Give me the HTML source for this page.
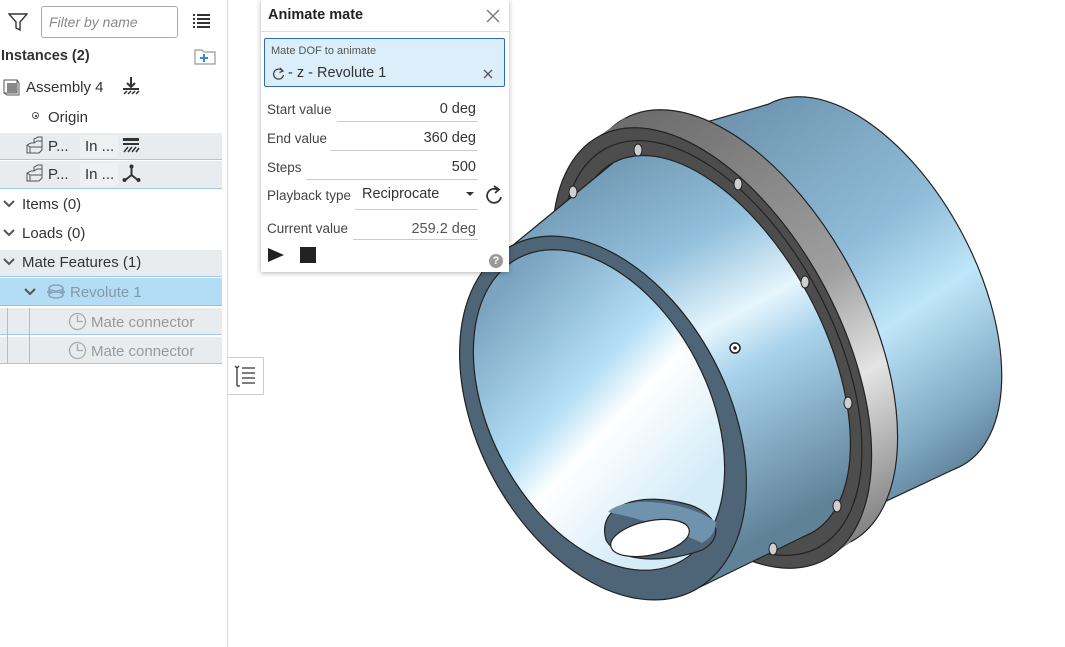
<!DOCTYPE html>
<html><head><meta charset="utf-8">
<style>
*{margin:0;padding:0;box-sizing:border-box}
body{width:1065px;height:647px;overflow:hidden;background:#fff;font-family:"Liberation Sans",sans-serif;color:#333;position:relative}
.a{position:absolute;white-space:nowrap}
.row{position:absolute;left:0;width:222px;background:#e9ecef;border-bottom:1px solid #9fcbe8}
.t{font-size:14.5px;color:#333}
.lab{position:absolute;left:267px;font-size:13.5px;color:#444}
.val{position:absolute;right:33px;font-size:14.5px;color:#333;text-align:right}
.ln{position:absolute;height:1px;background:#ccc}
</style></head><body>

<svg class="a" style="left:0;top:0" width="1065" height="647" viewBox="0 0 1065 647" xmlns:xlink="http://www.w3.org/1999/xlink">
<defs>
<linearGradient id="gb" gradientUnits="userSpaceOnUse" x1="560" y1="170" x2="760" y2="540">
<stop offset="0" stop-color="#6c93ae"/><stop offset="0.3" stop-color="#93c0dc"/><stop offset="0.5" stop-color="#e6f6fd"/><stop offset="0.62" stop-color="#a9d3ec"/><stop offset="1" stop-color="#5f8299"/></linearGradient>
<linearGradient id="gb2" xlink:href="#gb" href="#gb" gradientTransform="rotate(-62 712 348)"/>
<linearGradient id="gk" gradientUnits="userSpaceOnUse" x1="740" y1="110" x2="990" y2="470">
<stop offset="0" stop-color="#6f95af"/><stop offset="0.4" stop-color="#8fbcd8"/><stop offset="0.6" stop-color="#bfe6fa"/><stop offset="0.85" stop-color="#7fa8c2"/><stop offset="1" stop-color="#58788f"/></linearGradient>
<linearGradient id="gk2" xlink:href="#gk" href="#gk" gradientTransform="rotate(-62 865 285)"/>
<linearGradient id="gg" gradientUnits="userSpaceOnUse" x1="640" y1="120" x2="900" y2="560">
<stop offset="0" stop-color="#6e6e6e"/><stop offset="0.45" stop-color="#a0a0a0"/><stop offset="0.65" stop-color="#e4e4e4"/><stop offset="1" stop-color="#666"/></linearGradient>
<linearGradient id="gg2" xlink:href="#gg" href="#gg" gradientTransform="rotate(-62 738 330)"/>
<linearGradient id="gi" gradientUnits="userSpaceOnUse" x1="500" y1="290" x2="700" y2="480">
<stop offset="0" stop-color="#7aa4c0"/><stop offset="0.45" stop-color="#b4dff6"/><stop offset="0.62" stop-color="#ffffff"/><stop offset="1" stop-color="#d4ecf8"/></linearGradient>
<linearGradient id="gi2" xlink:href="#gi" href="#gi" gradientTransform="rotate(-62 598 408)"/>
</defs>
<g stroke="#222" stroke-width="1.2">
<ellipse cx="865" cy="285" rx="205" ry="110" transform="rotate(62 865 285)" fill="url(#gk2)"/>
<polygon points="644,140 769,104 961,466 846,520" fill="url(#gk)" stroke="none"/>
<line x1="644" y1="140" x2="769" y2="104"/>
<line x1="846" y1="520" x2="961" y2="466"/>
<ellipse cx="738" cy="330" rx="240" ry="128" transform="rotate(62 738 330)" fill="url(#gg2)"/>
<polygon points="599,136 625,118 851,542 825,560" fill="url(#gg)" stroke="none"/>
<ellipse cx="712" cy="348" rx="240" ry="128" transform="rotate(62 712 348)" fill="#4d4d4d"/>
<ellipse cx="712" cy="348" rx="226" ry="120" transform="rotate(62 712 348)" fill="none" stroke="#222"/>
<ellipse cx="712" cy="348" rx="210" ry="110" transform="rotate(62 712 348)" fill="url(#gb2)"/>
<polygon points="512,246 613,163 811,533 694,590" fill="url(#gb)" stroke="none"/>
<line x1="512" y1="246" x2="613" y2="163"/>
<line x1="694" y1="590" x2="811" y2="533"/>
<ellipse cx="603" cy="418" rx="195" ry="125" transform="rotate(62 603 418)" fill="#4e6577"/>
<ellipse cx="599" cy="410" rx="172" ry="109" transform="rotate(62 599 410)" fill="url(#gi2)"/>
<path d="M606,540 C596,505 640,490 690,505 C722,516 722,540 702,550 C670,562 620,565 606,540Z" fill="#4e6577"/>
<path d="M608,512 C625,495 685,500 716,522 C716,530 712,537 702,543 C665,525 628,516 608,512Z" fill="#6f93ad" stroke="none"/>
<ellipse cx="650" cy="538" rx="40" ry="17" transform="rotate(-12 650 538)" fill="#fff"/>
</g>
<g fill="#cfcfcf" stroke="#222" stroke-width="1">
<ellipse cx="638" cy="150" rx="4" ry="6"/><ellipse cx="573" cy="192" rx="4" ry="6"/><ellipse cx="738" cy="184" rx="4" ry="6"/>
<ellipse cx="805" cy="282" rx="4" ry="6"/><ellipse cx="848" cy="403" rx="4" ry="6"/><ellipse cx="837" cy="506" rx="4" ry="6"/>
<ellipse cx="773" cy="549" rx="4" ry="6"/>
</g>
<circle cx="735" cy="348" r="5" fill="#fff" stroke="#222" stroke-width="1.5"/><circle cx="735" cy="348" r="1.8" fill="#222"/>
</svg>

<div class="a" style="left:227px;top:0;width:1px;height:647px;background:#ddd"></div>
<svg class="a" style="left:8px;top:12px" width="20" height="20" viewBox="0 0 20 20"><path d="M1,2 H19 L12,10 V18 L8,16 V10 Z" fill="none" stroke="#333" stroke-width="1.4"/></svg>
<div class="a" style="left:41px;top:6px;width:137px;height:32px;border:1px solid #aaa;border-radius:3px;font-style:italic;color:#888;font-size:14px;padding:7px 7px">Filter by name</div>
<svg class="a" style="left:193px;top:14px" width="17" height="15"><g fill="#333"><rect x="0" y="0" width="2" height="2"/><rect x="4" y="0" width="13" height="2"/><rect x="0" y="4" width="2" height="2"/><rect x="4" y="4" width="13" height="2"/><rect x="0" y="8" width="2" height="2"/><rect x="4" y="8" width="13" height="2"/><rect x="0" y="12" width="2" height="2"/><rect x="4" y="12" width="13" height="2"/></g></svg>
<div class="a" style="left:1px;top:48px;font-size:14.5px;font-weight:bold;color:#333">Instances (2)</div>
<svg class="a" style="left:194px;top:48px" width="23" height="18"><path d="M1,2 H8 L10,4 H21 V16 H1 Z" fill="none" stroke="#999" stroke-width="1.2"/><path d="M6,10 H14 M10,6 V14" stroke="#3a8ad8" stroke-width="2"/></svg>
<svg class="a" style="left:3px;top:79px" width="18" height="17"><rect x="1" y="1" width="13" height="13" fill="#fff" stroke="#555"/><rect x="4" y="4" width="10" height="10" fill="#888"/><path d="M1,14 L4,16 H16 V4 L14,1" fill="none" stroke="#555"/></svg>
<div class="a t" style="left:26px;top:79px;font-size:15px">Assembly 4</div>
<svg class="a" style="left:122px;top:77px" width="18" height="18"><path d="M9,0 V9 M5,6 L9,10 L13,6" stroke="#333" stroke-width="2" fill="none"/><rect x="1" y="11" width="16" height="2" fill="#333"/><path d="M2,17 L5,14 M6,17 L9,14 M10,17 L13,14 M14,17 L17,14" stroke="#333" stroke-width="1.5"/></svg>
<div class="a" style="left:32px;top:112px;width:7px;height:7px;border:1px solid #555;border-radius:50%"></div>
<div class="a" style="left:34.5px;top:114.5px;width:2px;height:2px;background:#555"></div>
<div class="a t" style="left:48px;top:109px;font-size:15px">Origin</div>

<div class="row" style="top:133px;height:27px"></div>
<div class="row" style="top:161px;height:28px"></div>
<div class="a" style="left:80px;top:135px;width:38px;height:23px;background:#eef0f2"></div>
<div class="a" style="left:80px;top:163px;width:38px;height:23px;background:#eef0f2"></div>
<svg class="a" style="left:25px;top:136px" width="19" height="19"><path d="M2,17 V9 L6,7 H9 V3 L13,1 H17 V14 L14,17 Z M2,9 L5,11 H17 M9,7 L12,5 H17 M5,11 V17" fill="none" stroke="#555" stroke-width="1"/></svg>
<svg class="a" style="left:25px;top:164px" width="19" height="19"><path d="M2,17 V9 L6,7 H9 V3 L13,1 H17 V14 L14,17 Z M2,9 L5,11 H17 M9,7 L12,5 H17 M5,11 V17" fill="none" stroke="#555" stroke-width="1"/></svg>
<div class="a t" style="left:48px;top:138px;font-size:15px">P...</div><div class="a t" style="left:85px;top:138px;font-size:15px">In ...</div>
<div class="a t" style="left:48px;top:166px;font-size:15px">P...</div><div class="a t" style="left:85px;top:166px;font-size:15px">In ...</div>
<svg class="a" style="left:122px;top:138px" width="18" height="15"><rect x="1" y="0" width="16" height="3" fill="#333"/><rect x="1" y="5" width="16" height="2" fill="#333"/><path d="M2,14 L6,9 M6,14 L10,9 M10,14 L14,9 M14,14 L17,10" stroke="#333" stroke-width="1.5"/></svg>
<svg class="a" style="left:122px;top:164px" width="19" height="19"><path d="M9.5,1 V11 L2,17 M9.5,11 L17,17" stroke="#333" stroke-width="2" fill="none"/><circle cx="9.5" cy="2.5" r="2" fill="#333"/><circle cx="2.5" cy="16" r="2" fill="#333"/><circle cx="16.5" cy="16" r="2" fill="#333"/></svg>

<svg class="a" style="left:3px;top:200px" width="12" height="8"><path d="M1,1 L6,6 L11,1" fill="none" stroke="#555" stroke-width="2"/></svg>
<div class="a t" style="left:22px;top:196px;font-size:15px">Items (0)</div>
<svg class="a" style="left:3px;top:229px" width="12" height="8"><path d="M1,1 L6,6 L11,1" fill="none" stroke="#555" stroke-width="2"/></svg>
<div class="a t" style="left:22px;top:225px;font-size:15px">Loads (0)</div>
<div class="row" style="top:250px;height:27px"></div>
<svg class="a" style="left:3px;top:258px" width="12" height="8"><path d="M1,1 L6,6 L11,1" fill="none" stroke="#555" stroke-width="2"/></svg>
<div class="a t" style="left:22px;top:254px;font-size:15px">Mate Features (1)</div>
<div class="a" style="left:0;top:278px;width:222px;height:28px;background:#b3dcf5;border-bottom:1px solid #8cc4e8"></div>
<svg class="a" style="left:24px;top:288px" width="12" height="8"><path d="M1,1 L6,6 L11,1" fill="none" stroke="#555" stroke-width="2"/></svg>
<svg class="a" style="left:46px;top:283px" width="20" height="18"><ellipse cx="10" cy="5" rx="7" ry="3" fill="none" stroke="#8aa4b8" stroke-width="1.5"/><path d="M3,5 V12 M17,5 V12" stroke="#8aa4b8" stroke-width="1.5"/><ellipse cx="10" cy="12" rx="7" ry="3" fill="none" stroke="#8aa4b8" stroke-width="1.5"/><path d="M1,9 H6 M14,9 H19" stroke="#8aa4b8" stroke-width="2"/></svg>
<div class="a t" style="left:70px;top:284px;color:#8599a8;font-size:15px">Revolute 1</div>
<div class="row" style="top:308px;height:27px"></div>
<div class="row" style="top:337px;height:27px"></div>
<div class="a" style="left:7px;top:308px;width:1px;height:56px;background:#bbb"></div>
<div class="a" style="left:29px;top:308px;width:1px;height:56px;background:#bbb"></div>
<svg class="a" style="left:68px;top:312px" width="19" height="19"><circle cx="9.5" cy="9.5" r="8" fill="none" stroke="#aaa" stroke-width="1.3"/><path d="M9.5,3 V9.5 H15" fill="none" stroke="#aaa" stroke-width="1.3"/></svg>
<svg class="a" style="left:68px;top:341px" width="19" height="19"><circle cx="9.5" cy="9.5" r="8" fill="none" stroke="#aaa" stroke-width="1.3"/><path d="M9.5,3 V9.5 H15" fill="none" stroke="#aaa" stroke-width="1.3"/></svg>
<div class="a t" style="left:91px;top:314px;color:#999;font-size:15px">Mate connector</div>
<div class="a t" style="left:91px;top:343px;color:#999;font-size:15px">Mate connector</div>

<div class="a" style="left:228px;top:357px;width:36px;height:38px;background:#fff;border:1px solid #ccc;border-left:none"></div>
<svg class="a" style="left:234px;top:365px" width="22" height="22"><path d="M1,1 L3,3 L5,1 M3,3 V21 M8,3 H21 M8,8 H21 M8,13 H21 M8,18 H21 M3,21 H6" fill="none" stroke="#333" stroke-width="1.3"/></svg>

<div class="a" style="left:261px;top:0;width:248px;height:272px;background:#fff;box-shadow:0 1px 5px rgba(0,0,0,0.3)"></div>
<div class="a" style="left:268px;top:7px;font-size:14.5px;font-weight:bold;color:#222">Animate mate</div>
<svg class="a" style="left:486px;top:9px" width="14" height="14"><path d="M1,1 L13,13 M13,1 L1,13" stroke="#777" stroke-width="1.3"/></svg>
<div class="a" style="left:261px;top:31px;width:248px;height:1px;background:#ddd"></div>
<div class="a" style="left:264px;top:38px;width:241px;height:49px;background:#dbeef9;border:1px solid #2c6db0;border-radius:2px"></div>
<div class="a" style="left:271px;top:45px;font-size:11px;color:#555">Mate DOF to animate</div>
<svg class="a" style="left:272px;top:67px" width="13" height="13"><path d="M10.5,4 A5,5 0 1 0 11.5,8" fill="none" stroke="#444" stroke-width="1.3"/><path d="M8,1 L11,4 L7.5,5.5" fill="none" stroke="#444" stroke-width="1.3"/></svg>
<div class="a" style="left:288px;top:65px;font-size:14.5px;color:#333">- z - Revolute 1</div>
<svg class="a" style="left:483px;top:69px" width="10" height="10"><path d="M1,1 L9,9 M9,1 L1,9" stroke="#555" stroke-width="1.3"/></svg>

<div class="lab" style="top:102px">Start value</div><div class="val" style="left:0;width:476px;top:101px">0 deg</div><div class="ln" style="left:337px;width:141px;top:121px"></div>
<div class="lab" style="top:131px">End value</div><div class="val" style="left:0;width:476px;top:130px">360 deg</div><div class="ln" style="left:330px;width:148px;top:150px"></div>
<div class="lab" style="top:160px">Steps</div><div class="val" style="left:0;width:476px;top:159px">500</div><div class="ln" style="left:306px;width:172px;top:179px"></div>
<div class="lab" style="top:188px">Playback type</div><div class="a" style="left:362px;top:186px;font-size:14.5px;color:#333">Reciprocate</div>
<div class="a" style="left:466px;top:192px;width:0;height:0;border-left:4px solid transparent;border-right:4px solid transparent;border-top:4px solid #333"></div>
<div class="ln" style="left:355px;width:123px;top:209px"></div>
<svg class="a" style="left:484px;top:185px" width="20" height="20"><path d="M14,5 A7,7 0 1 0 17,12" fill="none" stroke="#333" stroke-width="1.8"/><path d="M10,1 L15,4.5 L11,8" fill="none" stroke="#333" stroke-width="1.8"/></svg>
<div class="lab" style="top:221px">Current value</div><div class="val" style="left:0;width:476px;top:221px;color:#555">259.2 deg</div><div class="ln" style="left:353px;width:125px;top:239px"></div>
<svg class="a" style="left:267px;top:247px" width="18" height="16"><path d="M1,1 L17,8 L1,15 Z" fill="#222"/></svg>
<div class="a" style="left:300px;top:247px;width:16px;height:16px;background:#222"></div>
<div class="a" style="left:489px;top:254px;width:14px;height:14px;border-radius:50%;background:#999;color:#fff;font-size:11px;font-weight:bold;text-align:center;line-height:14px">?</div>
</body></html>
